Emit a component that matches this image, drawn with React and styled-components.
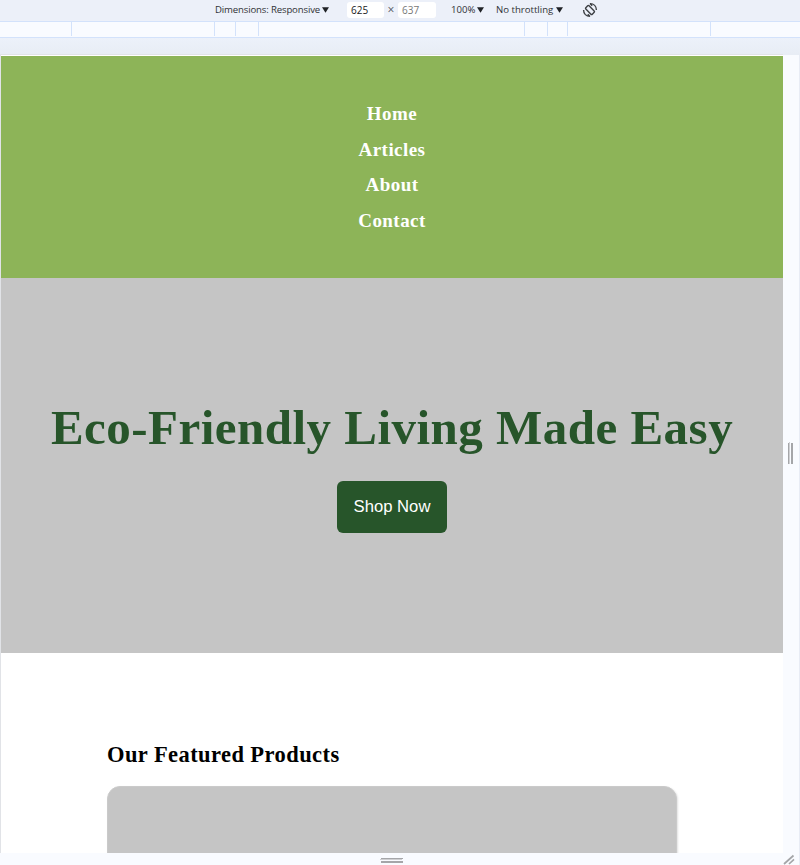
import React from "react";
import styled, { createGlobalStyle } from "styled-components";

const GlobalStyle = createGlobalStyle`
  * { box-sizing: border-box; }
  body { margin: 0; background: #ebf0f8; overflow: hidden; }
  h1, h2, p { margin: 0; }
`;

const Shell = styled.div`
  width: 800px;
  height: 865px;
  display: flex;
  flex-direction: column;
  overflow: hidden;
`;

const Toolbar = styled.div`
  height: 21px;
  flex: none;
  display: flex;
  align-items: center;
  padding-left: 215px;
  padding-bottom: 1px;
  background: #ecf0f9;
  color: #303236;
  font: 9.6px/20px "Open Sans", "Noto Sans", sans-serif;
  white-space: nowrap;
`;

const Picker = styled.div`
  width: ${(p) => p.$width}px;
  margin-left: ${(p) => p.$before || 0}px;
  flex: none;
  display: flex;
  align-items: center;
  justify-content: space-between;
  letter-spacing: ${(p) => p.$tracking}px;
`;

const Caret = styled.svg`
  width: 7px;
  height: 6px;
  flex: none;
  display: block;
  margin-bottom: 1px;
`;

const SizeField = styled.div`
  width: ${(p) => p.$width}px;
  height: 16px;
  margin-left: ${(p) => p.$before || 0}px;
  flex: none;
  padding-left: 4px;
  border-radius: 3px;
  background: #fff;
  color: ${(p) => (p.$muted ? "#777" : "#18191b")};
  font-size: 10px;
  line-height: 17px;
`;

const Times = styled.span`
  width: 14px;
  flex: none;
  text-align: center;
  font-size: 12px;
  color: #55585d;
`;

const RotateIcon = styled.svg`
  width: 16px;
  height: 16px;
  margin-left: 19px;
  flex: none;
  display: block;
`;

const Ruler = styled.div`
  height: 17px;
  flex: none;
  display: flex;
  background: #f9fbff;
  border-top: 1px solid #d3e2fb;
  border-bottom: 1px solid #d3e2fb;
`;

const RulerSpan = styled.div`
  width: ${(p) => p.$width}px;
  height: 14px;
  flex: none;
  border-right: 1px solid #d3e2fb;
`;

const Gutter = styled.div`
  height: 16px;
  flex: none;
  background: linear-gradient(#ecf1fa, #e8edf5);
`;

const Stage = styled.div`
  flex: 1;
  min-height: 0;
  display: grid;
  grid-template-columns: 783px 17px;
  grid-template-rows: 799px 12px;
  background: #f9fbff;
`;

const Viewport = styled.div`
  display: flex;
  flex-direction: column;
  overflow: hidden;
  background: #fff;
  border-top: 1px solid #e1e3e7;
  border-left: 1px solid #e1e3e7;
  padding-top: 1px;
  font-family: "Liberation Serif", "Times New Roman", serif;
`;

const Nav = styled.nav`
  height: 222px;
  flex: none;
  padding-top: 40px;
  display: flex;
  flex-direction: column;
  align-items: center;
  background: #8db458;
`;

const NavLink = styled.a`
  height: 35.6px;
  line-height: 35.6px;
  font-size: 19px;
  font-weight: 700;
  letter-spacing: 0.45px;
  color: #fff;
`;

const Hero = styled.section`
  height: 375px;
  flex: none;
  padding-top: 120px;
  display: flex;
  flex-direction: column;
  align-items: center;
  background: #c5c5c5;
`;

const HeroTitle = styled.h1`
  font-size: 49px;
  line-height: 60px;
  letter-spacing: 0.48px;
  color: #27552a;
  white-space: nowrap;
`;

const ShopButton = styled.button`
  width: 110px;
  height: 52px;
  margin-top: 23px;
  padding: 0;
  border: 0;
  border-radius: 6px;
  background: #27552a;
  color: #fff;
  font: 16.67px "Liberation Sans", Arial, sans-serif;
`;

const Products = styled.section`
  flex: 1;
  min-height: 0;
  padding: 88px 105px 0 106px;
`;

const ProductsTitle = styled.h2`
  font-size: 22.5px;
  line-height: 28px;
  letter-spacing: 0.42px;
  white-space: nowrap;
`;

const ProductCard = styled.div`
  width: 570px;
  height: 250px;
  margin-top: 17px;
  border: 1px solid #cacaca;
  border-radius: 13px;
  background: #c5c5c5;
  box-shadow: 1px 1px 2px rgba(0, 0, 0, 0.12);
`;

const SideRail = styled.div`
  display: flex;
  align-items: center;
  justify-content: center;
  padding-bottom: 2px;
  border-top: 1px solid #e8edf5;
  border-right: 1px solid #e8ecf5;
`;

const BottomRail = styled.div`
  display: flex;
  justify-content: center;
  padding-top: 5px;
`;

const Corner = styled.div`
  display: flex;
  justify-content: flex-end;
  padding-right: 4px;
  border-right: 1px solid #e8ecf5;
`;

const Grip = styled.svg`
  display: block;
  flex: none;
`;

const spans = [72, 143, 21, 23, 266, 23, 20, 143];
const links = ["Home", "Articles", "About", "Contact"];

function Arrow() {
  return (
    <Caret viewBox="0 0 7 6">
      <path d="M0 .3h7L3.5 5.8z" fill="#202226" />
    </Caret>
  );
}

export default function App() {
  return (
    <Shell>
      <GlobalStyle />
      <Toolbar>
        <Picker $width={114} $tracking={-0.15}>Dimensions: Responsive<Arrow /></Picker>
        <SizeField $width={37} $before={18}>625</SizeField>
        <Times>×</Times>
        <SizeField $width={38} $muted>637</SizeField>
        <Picker $width={33} $before={15} $tracking={0}>100%<Arrow /></Picker>
        <Picker $width={67} $before={12} $tracking={0}>No throttling<Arrow /></Picker>
        <RotateIcon viewBox="0 0 16 16" fill="none" stroke="#3c3f43" strokeWidth="1.4">
          <rect x="5.7" y="3.4" width="4.6" height="9.2" rx="1" transform="rotate(-45 8 8)" />
          <path d="M8 1.6c3.8 0 6.4 2.6 6.4 6.4M8 14.4c-3.8 0-6.4-2.6-6.4-6.4M8 1.6l2.2 2.2M8 14.4l-2.2-2.2" />
        </RotateIcon>
      </Toolbar>
      <Ruler>
        {spans.map((w, i) => <RulerSpan key={i} $width={w} />)}
      </Ruler>
      <Gutter />
      <Stage>
        <Viewport>
          <Nav>
            {links.map((label) => <NavLink key={label}>{label}</NavLink>)}
          </Nav>
          <Hero>
            <HeroTitle>Eco-Friendly Living Made Easy</HeroTitle>
            <ShopButton>Shop Now</ShopButton>
          </Hero>
          <Products>
            <ProductsTitle>Our Featured Products</ProductsTitle>
            <ProductCard />
          </Products>
        </Viewport>
        <SideRail>
          <Grip width="6" height="22" viewBox="0 0 6 22">
            <path d="M0 1h1v21H0zM3 1h2v21H3z" fill="#a5a6a9" />
            <path d="M1 0h1v22H1z" fill="#cfd0d3" />
          </Grip>
        </SideRail>
        <BottomRail>
          <Grip width="23" height="5" viewBox="0 0 23 5">
            <path d="M1 0h22v1H1zM1 3h22v2H1z" fill="#a5a6a9" />
            <path d="M0 1h22v1H0z" fill="#cfd0d3" />
          </Grip>
        </BottomRail>
        <Corner>
          <Grip width="12" height="12" viewBox="0 0 12 12">
            <path d="M1 11L10.5 2.5M6 11l5-4.7" fill="none" stroke="#a4a5a8" strokeWidth="1.7" />
          </Grip>
        </Corner>
      </Stage>
    </Shell>
  );
}
